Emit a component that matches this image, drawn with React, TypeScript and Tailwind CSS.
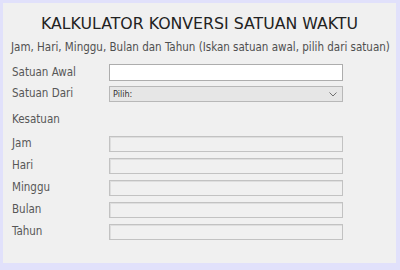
import React from 'react';

const font = { fontFamily: '"DejaVu Sans Condensed", "DejaVu Sans", sans-serif' };
const titleFont = { fontFamily: '"DejaVu Sans", sans-serif' };

const Label = ({ children }: { children: React.ReactNode }) => (
  <div className="w-[106px] shrink-0 pl-[9px] text-[11.5px] leading-none text-[#575757]">{children}</div>
);

const ResultRow = ({ label }: { label: string }) => (
  <div className="flex items-center h-[16px]">
    <Label>{label}</Label>
    <div className="w-[234px] h-[16px] border border-[#c2c2c2] bg-[#f0f0f0] shadow-[inset_1px_1px_0_#dedede]" />
  </div>
);

export default function App() {
  return (
    <div className="w-[400px] h-[270px] bg-[#e1e1fb] pt-[3px] pl-[3px]" style={font}>
      <div className="w-[393px] h-[260px] bg-[#f0f0f0] flex flex-col">
        {/* Header */}
        <div
          className="pt-[11px] h-[20px] box-content text-center text-[15.75px] leading-[20px] text-[#222]"
          style={titleFont}
        >
          KALKULATOR KONVERSI SATUAN WAKTU
        </div>
        <div className="mt-[6px] pl-[8px] h-[14px] text-[11.5px] leading-[14px] text-[#4f4f4f] whitespace-nowrap">
          Jam, Hari, Minggu, Bulan dan Tahun (Iskan satuan awal, pilih dari satuan)
        </div>

        {/* Inputs */}
        <div className="mt-[10px] flex flex-col">
          <div className="flex items-center h-[17px]">
            <Label>Satuan Awal</Label>
            <input className="w-[234px] h-[17px] border border-[#adadad] bg-white outline-none" />
          </div>
          <div className="flex items-center h-[16px] mt-[5px]">
            <Label>Satuan Dari</Label>
            <div className="w-[234px] h-[16px] border border-[#b8b8b8] bg-[#e6e6e6] flex items-center justify-between pl-[3px] pr-[5px]">
              <span className="text-[9px] leading-none text-[#333]">Pilih:</span>
              <svg width="8" height="5" viewBox="0 0 8 5" fill="none">
                <path d="M0.5 0.5 L4 4 L7.5 0.5" stroke="#707070" strokeWidth="1" />
              </svg>
            </div>
          </div>
          <div className="flex items-center h-[16px] mt-[10px]">
            <Label>Kesatuan</Label>
          </div>
          <div className="mt-[8px] flex flex-col gap-[6px]">
            {['Jam', 'Hari', 'Minggu', 'Bulan', 'Tahun'].map((l) => (
              <ResultRow key={l} label={l} />
            ))}
          </div>
        </div>
      </div>
    </div>
  );
}
